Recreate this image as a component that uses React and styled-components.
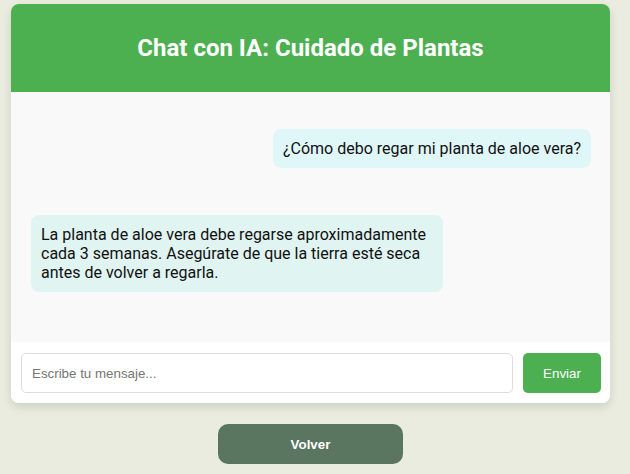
import React from "react";
import styled, { createGlobalStyle } from "styled-components";

const GlobalStyle = createGlobalStyle`
  html, body {
    margin: 0;
    padding: 0;
    background: #e9ecdf;
  }
  * {
    box-sizing: border-box;
  }
`;

const Page = styled.div`
  width: 630px;
  min-height: 474px;
  padding: 4px 20px 0 11px;
  display: flex;
  flex-direction: column;
  align-items: center;
  font-family: Roboto, "Liberation Sans", sans-serif;
`;

const Card = styled.div`
  width: 599px;
  background: #fff;
  border-radius: 8px;
  overflow: hidden;
  box-shadow: 0 4px 10px rgba(0, 0, 0, 0.12);
`;

const Header = styled.header`
  height: 88px;
  background: #4caf50;
  color: #fff;
  display: flex;
  align-items: center;
  justify-content: center;
  h1 {
    margin: 0;
    font-size: 24px;
    font-weight: 700;
  }
`;

const Messages = styled.div`
  height: 250px;
  background: #f9f9f9;
  padding: 37px 19px 20px 20px;
  display: flex;
  flex-direction: column;
  gap: 47px;
  overflow-y: auto;
`;

const Bubble = styled.div`
  box-sizing: content-box;
  max-width: 70%;
  padding: 10px;
  border-radius: 8px;
  font-size: 16px;
  line-height: 19px;
  color: #111;
  align-self: ${(p) => (p.$user ? "flex-end" : "flex-start")};
  background: ${(p) => (p.$user ? "#e0f7fa" : "#e0f4f1")};
`;

const InputRow = styled.form`
  display: flex;
  gap: 10px;
  padding: 11px 9px 10px 10px;
  background: #fff;
`;

const Input = styled.input`
  flex: 1;
  height: 40px;
  padding: 0 10px;
  border: 1px solid #ddd;
  border-radius: 5px;
  font-family: "Liberation Sans", Arial, sans-serif;
  font-size: 13.333px;
  color: #333;
  outline: none;
  &::placeholder {
    color: #757575;
  }
`;

const SendButton = styled.button`
  width: 78px;
  height: 40px;
  border: none;
  border-radius: 5px;
  background: #4caf50;
  color: #fff;
  font-family: "Liberation Sans", Arial, sans-serif;
  font-size: 13.333px;
  font-weight: 400;
  cursor: pointer;
`;

const BackButton = styled.button`
  margin-top: 21px;
  width: 185px;
  height: 40px;
  border: none;
  border-radius: 10px;
  background: #5a7560;
  color: #fff;
  font-family: "Liberation Sans", Arial, sans-serif;
  font-size: 13.333px;
  font-weight: 700;
  cursor: pointer;
`;

const messages = [
  { id: 1, user: true, text: "¿Cómo debo regar mi planta de aloe vera?" },
  {
    id: 2,
    user: false,
    text: "La planta de aloe vera debe regarse aproximadamente cada 3 semanas. Asegúrate de que la tierra esté seca antes de volver a regarla.",
  },
];

export default function App() {
  return (
    <>
      <GlobalStyle />
      <Page>
        <Card>
          <Header>
            <h1>Chat con IA: Cuidado de Plantas</h1>
          </Header>
          <Messages>
            {messages.map((m) => (
              <Bubble key={m.id} $user={m.user}>
                {m.text}
              </Bubble>
            ))}
          </Messages>
          <InputRow onSubmit={(e) => e.preventDefault()}>
            <Input placeholder="Escribe tu mensaje..." />
            <SendButton type="submit">Enviar</SendButton>
          </InputRow>
        </Card>
        <BackButton>Volver</BackButton>
      </Page>
    </>
  );
}
